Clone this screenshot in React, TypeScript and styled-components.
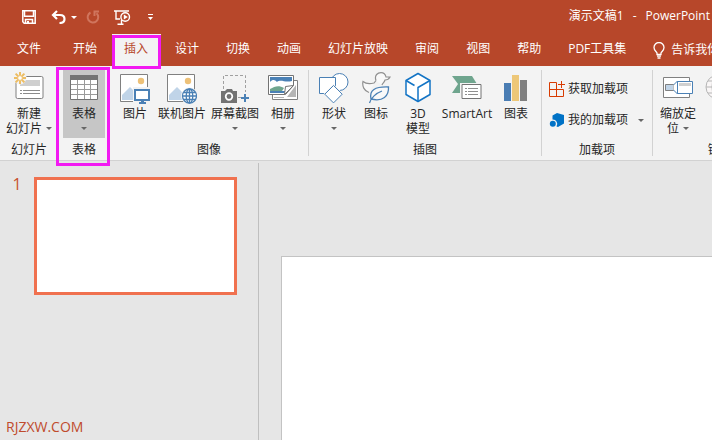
import React from "react";
import styled, { createGlobalStyle, css } from "styled-components";

const color = {
  brand: "#b7472a",
  ribbon: "#f3f3f3",
  canvas: "#e6e6e6",
  line: "#d2d2d2",
  text: "#262626",
  mark: "#f21af2",
  blue: "#4a80b5",
  gray: "#737373",
};

const GlobalStyle = createGlobalStyle`
  *, *::before, *::after { box-sizing: border-box; }
  body {
    margin: 0;
    overflow: hidden;
    background: ${color.canvas};
    color: ${color.text};
    font: 12px/16px "Open Sans", "Noto Sans", "Noto Sans CJK SC", sans-serif;
  }
  button { font: inherit; color: inherit; border: 0; background: none; padding: 0; cursor: pointer; }
  svg { display: block; flex: none; }
`;

const Page = styled.div`
  min-height: 100vh;
  display: flex;
  flex-direction: column;
  overflow: hidden;
`;

const TitleBar = styled.header`
  display: flex;
  align-items: center;
  justify-content: space-between;
  height: 34px;
  padding: 0 2px 0 22px;
  background: ${color.brand};
  color: #fff;
`;

const QuickAccess = styled.div`
  display: flex;
  align-items: center;
`;

const QuickButton = styled.button<{ $gap?: number }>`
  margin-right: ${(p) => p.$gap ?? 0}px;
`;

const DocumentTitle = styled.h1`
  display: flex;
  gap: 9px;
  margin: 0;
  padding-bottom: 3px;
  font-size: 12px;
  font-weight: 400;
  white-space: nowrap;
`;

const TabBar = styled.nav`
  display: flex;
  height: 32px;
  gap: 2px;
  padding-left: 5px;
  background: ${color.brand};
  white-space: nowrap;
`;

const Tab = styled.button<{ $active?: boolean; $wide?: boolean }>`
  position: relative;
  flex: none;
  padding: 0 13px 2px 12px;
  margin-right: ${(p) => (p.$wide ? 5 : 0)}px;
  color: ${(p) => (p.$active ? color.brand : "#fff")};
  background: ${(p) => (p.$active ? color.ribbon : "transparent")};
`;

const TellMe = styled.button`
  display: flex;
  align-items: center;
  gap: 6px;
  flex: none;
  margin-left: 12px;
  color: #fff;
`;

const Highlight = styled.span<{ $inset: string }>`
  position: absolute;
  z-index: 2;
  inset: ${(p) => p.$inset};
  border: 3px solid ${color.mark};
  pointer-events: none;
`;

const Ribbon = styled.section`
  display: flex;
  height: 95px;
  background: ${color.ribbon};
  border-bottom: 1px solid ${color.line};
`;

const Group = styled.div`
  position: relative;
  flex: none;
  display: flex;
  flex-direction: column;
  justify-content: space-between;
  padding: 4px 4px 2px;

  &::after {
    content: "";
    position: absolute;
    top: 4px;
    bottom: 4px;
    right: -1px;
    width: 1px;
    background: ${color.line};
  }
  & + & { margin-left: 1px; }
`;

const GroupTools = styled.div`
  display: flex;
  height: 68px;
`;

const GroupLabel = styled.div`
  text-align: center;
`;

const Tool = styled.button<{ $width?: number; $active?: boolean }>`
  display: flex;
  flex-direction: column;
  align-items: center;
  flex: none;
  width: ${(p) => p.$width ?? 42}px;
  padding-top: 2px;
  white-space: nowrap;
  ${(p) => p.$active && css`background: #c6c6c6;`}
`;

const ToolIcon = styled.span`
  height: 34px;
`;

const ToolLine = styled.span`
  display: flex;
  align-items: center;
  gap: 4px;
  height: 15px;
`;

const AddInList = styled.div`
  display: flex;
  flex-direction: column;
  gap: 15px;
  width: 102px;
  padding: 11px 4px 0 3px;
`;

const AddIn = styled.button`
  display: flex;
  align-items: center;
  gap: 3px;
  height: 16px;
  white-space: nowrap;
`;

const Push = styled.span`
  margin-left: auto;
`;

const Workspace = styled.main`
  flex: 1;
  display: grid;
  grid-template-columns: 259px 1fr;
  padding-top: 2px;
`;

const Slides = styled.aside`
  display: flex;
  flex-direction: column;
  justify-content: space-between;
  padding: 14px 21px 5px 6px;
  border-right: 1px solid #bfbfbf;
`;

const SlideEntry = styled.button`
  display: grid;
  grid-template-columns: 28px 1fr;
  align-items: start;
`;

const SlideNumber = styled.span`
  color: #c8502f;
  font-size: 16px;
  line-height: 14px;
  padding-right: 6px;
`;

const Thumbnail = styled.span`
  height: 118px;
  border: 3px solid #f0714f;
  background: #fff;
`;

const SiteMark = styled.div`
  color: #c04b2c;
  font-size: 14px;
  line-height: 16px;
`;

const Stage = styled.div`
  display: flex;
  padding: 93px 0 0 22px;
`;

const Slide = styled.div`
  flex: 1;
  background: #fff;
  border: solid #c3c3c3;
  border-width: 1px 0 0 1px;
`;

const Caret = ({ fill = "#666" }: { fill?: string }) => (
  <svg width="6" height="3" viewBox="0 0 6 3"><path d="M0 0h6L3 3z" fill={fill} /></svg>
);

const SaveIcon = () => (
  <svg width="14" height="14" viewBox="0 0 14 14" fill="none" stroke="#fff" strokeWidth="1.500">
    <path d="M.8.8h12.400v12.400H2.200L.8 11.800z" />
    <path d="M2.500 1v5.200h9V1M3.500 13V9.500h7V13" />
    <path d="M5 11h2v2H5z" fill="#fff" stroke="none" />
  </svg>
);

const UndoIcon = () => (
  <svg width="15" height="14" viewBox="0 0 15 14" fill="none" stroke="#fff" strokeWidth="2.200">
    <path d="M6 1 2 5l4 4M2 5h7c3 0 4.500 1.500 4.500 4S12 13 8.500 13" />
  </svg>
);

const RedoIcon = () => (
  <svg width="14" height="14" viewBox="0 0 14 14" fill="none" stroke="#d0755d" strokeWidth="2">
    <path d="M4.500 2.500a5.300 5.300 0 1 0 6 .8M8.500 6V1.500H13" />
  </svg>
);

const PresentIcon = () => (
  <svg width="17" height="15" viewBox="0 0 17 15" fill="none" stroke="#fff" strokeWidth="1.400">
    <path d="M0 1h15M2 1v8h4M7.500 10v4M3.500 14.200h6" />
    <circle cx="11.200" cy="7" r="4.300" />
    <path d="M9.800 4.500v5L13.800 7z" fill="#fff" stroke="none" />
  </svg>
);

const MoreIcon = () => (
  <svg width="5" height="6" viewBox="0 0 5 6" fill="#fff"><path d="M0 0h5v1H0zM0 3h5L2.500 6z" /></svg>
);

const BulbIcon = () => (
  <svg width="12" height="17" viewBox="0 0 12 17" fill="none" stroke="#fff" strokeWidth="1.300">
    <path d="M4 12.500V11C3.500 9.500 1 8.500 1 5.500a5 5 0 0 1 10 0C11 8.500 8.500 9.500 8 11v1.500zM4 14.200h4M4.500 16h3" />
  </svg>
);

const NewSlideIcon = () => (
  <svg width="32" height="32" viewBox="0 0 32 32" fill="none">
    <rect x="3" y="4.500" width="27" height="22" rx="1.500" fill="#fff" stroke="#808080" />
    <path d="M7 8h20v6H7z" fill="#cfcfcf" />
    <path d="M7 18.500h2m1 0h17M7 21.500h2m1 0h17" stroke="#8a8a8a" />
    <circle cx="7" cy="6" r="6.500" fill="#f3f3f3" />
    <path d="M7 0v3.500M7 8.500V12M1 6h3.500M9.500 6H13M2.600 1.600l2.600 2.600M8.800 7.800l2.600 2.600M11.400 1.600 8.800 4.200M5.200 7.800l-2.600 2.600" stroke="#edbd63" strokeWidth="2" />
    <circle cx="7" cy="6" r="2.400" fill="#fff" stroke="#edbd63" />
  </svg>
);

const TableIcon = () => (
  <svg width="28" height="32" viewBox="0 0 28 32" fill="none">
    <path d="M.5 3.500h27v24H.5z" fill="#fff" stroke="#737373" />
    <path d="M0 3h28v5H0z" fill="#737373" />
    <path d="M1 12.500h26M1 17.500h26M1 22.500h26M7.500 8v19M14.500 8v19M20.500 8v19" stroke="#9a9a9a" />
  </svg>
);

const PhotoBase = () => (
  <>
    <path d="M.5 2.500h27v27H.5z" fill="#fff" stroke="#808080" />
    <circle cx="21" cy="9" r="3.200" fill="#edc178" />
    <path d="M2 28v-5l8-8 4 4 5 6v3z" fill="#c0d4e8" />
  </>
);

const PictureIcon = () => (
  <svg width="30" height="32" viewBox="0 0 30 32">
    <PhotoBase />
    <path d="M13 15h17v17H13z" fill="#f3f3f3" />
    <path d="M15 18h14v10H15z" fill="#fff" stroke={color.blue} strokeWidth="2" />
    <path d="M21 29h3v1h2v2h-7v-2h2z" fill={color.blue} />
  </svg>
);

const OnlinePictureIcon = () => (
  <svg width="30" height="32" viewBox="0 0 30 32" fill="none">
    <PhotoBase />
    <circle cx="22.500" cy="24" r="8.500" fill="#f3f3f3" />
    <g stroke={color.blue} strokeWidth="1.300">
      <circle cx="22.500" cy="24" r="7" fill="#fff" />
      <ellipse cx="22.500" cy="24" rx="3.300" ry="7" />
      <path d="M22.500 17v14M15.500 24h14M17 20.500h11M17 27.500h11" />
    </g>
  </svg>
);

const ScreenshotIcon = () => (
  <svg width="29" height="32" viewBox="0 0 29 32" fill="none">
    <path d="M2.500 17V3.500h22V20M17 25.500h4" stroke="#a0a0a0" strokeDasharray="3 2" />
    <path d="M0 19h4l2-2h5l1 2h4v12H0z" fill="#737373" />
    <circle cx="8" cy="24.500" r="3.300" stroke="#fff" strokeWidth="1.700" />
    <path d="M24 22v8M20 26h8" stroke={color.blue} strokeWidth="2" />
  </svg>
);

const AlbumIcon = () => (
  <svg width="31" height="32" viewBox="0 0 31 32">
    <path d="M4.500 8.500h25v19h-25z" fill="#fff" stroke="#808080" />
    <path d="M19 25 28 13v12zM6 25h10v1H6z" fill="#b5b5b5" />
    <path d="M.5 3.500h25v10l-8 9H.5z" fill="#fff" stroke="#737373" />
    <path d="M2 5h22v8l-8 8H2z" fill={color.blue} />
    <path d="M2 10c3-3 5-2 7 0 4-3 8 1 15-1v4l-7 6H2z" fill="#fff" />
    <path d="M2 17c5-3 9-4 14-1l-2 3H2z" fill="#6fa58e" />
    <path d="m16.500 22.500 1-8 8-1z" fill="#fff" stroke="#737373" />
  </svg>
);

const ShapesIcon = () => (
  <svg width="30" height="32" viewBox="0 0 30 32" fill="#fff" stroke={color.blue}>
    <circle cx="20.500" cy="10" r="8.500" />
    <path d="M.5 5.500h16v16H.5z" />
    <path d="m14.500 12 10.200 10.200-10.200 10.200L4.300 22.200z" fill="#f3f3f3" stroke="none" />
    <path d="m14.500 13.500 8.700 8.700-8.700 8.700-8.700-8.700z" />
  </svg>
);

const DuckIcon = () => (
  <svg width="29" height="32" viewBox="0 0 29 32" fill="none">
    <path d="M14 8.500C12 3 16 .6 19 .6c3 0 4.500 2 5 4.400h4c-1 2-2.500 3-5 3-.6 2.500-2.500 3-3 5M14 8.500 12 11C8 12 4 12 1 9.500 0 14 2 19 7 20.500" fill="#f9f9f9" stroke="#909090" strokeWidth="1.200" />
    <path d="M9 27c-2-9 4-12.500 17.500-12C27 24 21 30 9 27zM7.500 31C9 26 14 21 20 19" fill="#f9f9f9" stroke={color.blue} strokeWidth="1.300" />
  </svg>
);

const CubeIcon = () => (
  <svg width="26" height="32" viewBox="0 0 26 32" fill="#fff" stroke="#1374c5" strokeWidth="1.500" strokeLinejoin="round">
    <path d="M13 1.500 25 8.500v14l-12 7-12-7v-14z" />
    <path d="m1 8.500 8.500 5M25 8.500l-12 7v14" fill="none" />
  </svg>
);

const SmartArtIcon = () => (
  <svg width="30" height="32" viewBox="0 0 30 32">
    <path d="M0 4h20l5 8-6 9H0l6-9z" fill="#6fa58e" />
    <path d="M8 11h22v18H8z" fill="#f3f3f3" />
    <path d="M10 12.500h19v14H10z" fill="#fff" stroke="#737373" />
    <path d="M13 16.500h2m1 0h10M13 19.500h2m1 0h10M13 22.500h2m1 0h10" stroke="#8f8f8f" />
  </svg>
);

const ChartIcon = () => (
  <svg width="24" height="32" viewBox="0 0 24 32">
    <path d="M0 11h7v18H0z" fill="#4a7db3" />
    <path d="M8 3h7v26H8z" fill="#edc778" />
    <path d="M16 8h7v21h-7z" fill="#808080" />
  </svg>
);

const StoreIcon = () => (
  <svg width="16" height="16" viewBox="0 0 16 16" fill="none" stroke="#d83b01">
    <path d="M7.500 1.500h-7v14h14v-7H.5M7.500 1.500v14M12.500 0v7M9 3.500h7" />
  </svg>
);

const MyAddInsIcon = () => (
  <svg width="16" height="16" viewBox="0 0 16 16" fill="#0072c6">
    <path d="m8 1 7 2v8.500L9 15l-1.500-.5a4.500 4.500 0 0 0-4-7V3.500z" />
    <circle cx="3.800" cy="11.800" r="3" />
  </svg>
);

const ZoomIcon = () => (
  <svg width="31" height="32" viewBox="0 0 31 32" fill="#fff">
    <path d="M.5 5.500h26v20H.5z" stroke="#808080" />
    <path d="M2.500 12.500h8v6h-8z" fill="#c0d4e8" stroke="#808080" />
    <path d="m10.500 13 4-4v13l-4-4" stroke={color.blue} />
    <path d="M14.500 9.500h15v12h-15z" stroke={color.blue} />
    <path d="M16 11h12v3H16z" fill="#d0d0d0" />
  </svg>
);

const LinkIcon = () => (
  <svg width="30" height="32" viewBox="0 0 30 32" fill="none" stroke="#b5b5b5">
    <circle cx="13" cy="15" r="12" fill="#f9f6f6" />
    <ellipse cx="13" cy="15" rx="6" ry="12" />
    <path d="M1 15h24M3 9h20M3 21h20M13 3v24" />
  </svg>
);

type ToolProps = {
  icon: React.ReactNode;
  lines?: string[];
  label?: string;
  width?: number;
  menu?: "inline" | "below";
  active?: boolean;
};

const RibbonTool = ({ icon, lines = [], label, width, menu, active }: ToolProps) => (
  <Tool $width={width} $active={active} aria-pressed={active} aria-label={label}>
    <ToolIcon>{icon}</ToolIcon>
    {lines.map((line, i) => (
      <ToolLine key={line}>
        {line}
        {menu === "inline" && i === lines.length - 1 && <Caret />}
      </ToolLine>
    ))}
    {menu === "below" && <ToolLine><Caret /></ToolLine>}
  </Tool>
);

const tabsAfter = ["设计", "切换", "动画", "幻灯片放映", "审阅", "视图", "帮助", "PDF工具集"];

export default function App() {
  return (
    <Page>
      <GlobalStyle />
      <TitleBar>
        <QuickAccess>
          <QuickButton aria-label="保存" $gap={15}><SaveIcon /></QuickButton>
          <QuickButton aria-label="撤消" $gap={5}><UndoIcon /></QuickButton>
          <QuickButton aria-label="撤消选项" $gap={9}><Caret fill="#fff" /></QuickButton>
          <QuickButton aria-label="重复" $gap={14}><RedoIcon /></QuickButton>
          <QuickButton aria-label="从头开始放映" $gap={17}><PresentIcon /></QuickButton>
          <QuickButton aria-label="自定义快速访问工具栏"><MoreIcon /></QuickButton>
        </QuickAccess>
        <DocumentTitle>
          <span>演示文稿1</span>
          <span>-</span>
          <span>PowerPoint</span>
        </DocumentTitle>
      </TitleBar>
      <TabBar>
        <Tab $wide>文件</Tab>
        <Tab>开始</Tab>
        <Tab $active aria-current="page">
          插入
          <Highlight $inset="1px 0 -3px 0" />
        </Tab>
        {tabsAfter.map((name) => <Tab key={name}>{name}</Tab>)}
        <TellMe><BulbIcon />告诉我你想要做什么</TellMe>
      </TabBar>
      <Ribbon>
        <Group>
          <GroupTools>
            <RibbonTool icon={<NewSlideIcon />} lines={["新建", "幻灯片"]} width={50} menu="inline" />
          </GroupTools>
          <GroupLabel>幻灯片</GroupLabel>
        </Group>
        <Group>
          <GroupTools>
            <RibbonTool icon={<TableIcon />} lines={["表格"]} menu="below" active />
          </GroupTools>
          <GroupLabel>表格</GroupLabel>
          <Highlight $inset="1px -1px -6px -3px" />
        </Group>
        <Group>
          <GroupTools>
            <RibbonTool icon={<PictureIcon />} lines={["图片"]} />
            <RibbonTool icon={<OnlinePictureIcon />} lines={["联机图片"]} width={52} />
            <RibbonTool icon={<ScreenshotIcon />} lines={["屏幕截图"]} width={54} menu="below" />
            <RibbonTool icon={<AlbumIcon />} lines={["相册"]} menu="below" />
          </GroupTools>
          <GroupLabel>图像</GroupLabel>
        </Group>
        <Group>
          <GroupTools>
            <RibbonTool icon={<ShapesIcon />} lines={["形状"]} menu="below" />
            <RibbonTool icon={<DuckIcon />} lines={["图标"]} />
            <RibbonTool icon={<CubeIcon />} lines={["3D", "模型"]} />
            <RibbonTool icon={<SmartArtIcon />} lines={["SmartArt"]} width={56} />
            <RibbonTool icon={<ChartIcon />} lines={["图表"]} />
          </GroupTools>
          <GroupLabel>插图</GroupLabel>
        </Group>
        <Group>
          <AddInList>
            <AddIn><StoreIcon />获取加载项</AddIn>
            <AddIn><MyAddInsIcon />我的加载项<Push><Caret /></Push></AddIn>
          </AddInList>
          <GroupLabel>加载项</GroupLabel>
        </Group>
        <Group>
          <GroupTools>
            <RibbonTool icon={<ZoomIcon />} lines={["缩放定", "位"]} menu="inline" />
            <RibbonTool icon={<LinkIcon />} label="链接" />
            <RibbonTool icon={<LinkIcon />} label="动作" />
          </GroupTools>
          <GroupLabel>链接</GroupLabel>
        </Group>
      </Ribbon>
      <Workspace>
        <Slides>
          <SlideEntry aria-label="幻灯片 1">
            <SlideNumber>1</SlideNumber>
            <Thumbnail />
          </SlideEntry>
          <SiteMark>RJZXW.COM</SiteMark>
        </Slides>
        <Stage><Slide /></Stage>
      </Workspace>
    </Page>
  );
}
